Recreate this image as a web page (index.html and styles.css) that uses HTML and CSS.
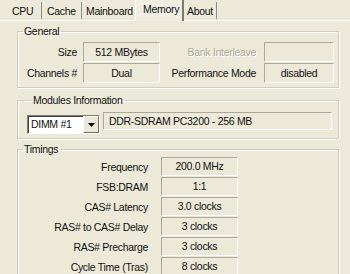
FILE: index.html
```html
<!DOCTYPE html>
<html>
<head>
<meta charset="utf-8">
<link rel="stylesheet" href="styles.css">
</head>
<body>
<div class="window">
  <div class="tabs">
    <div class="tab t-cpu">CPU</div>
    <div class="tab t-cache">Cache</div>
    <div class="tab t-main">Mainboard</div>
    <div class="tab t-mem active">Memory</div>
    <div class="tab t-about">About</div>
  </div>
  <div class="panel">
    <fieldset class="group g-general">
      <legend>General</legend>
      <div class="grid2">
        <div class="lbl l1">Size</div>
        <div class="box b1">512 MBytes</div>
        <div class="lbl l2 disabled">Bank Interleave</div>
        <div class="box b2"></div>
        <div class="lbl l1">Channels #</div>
        <div class="box b1">Dual</div>
        <div class="lbl l2">Performance Mode</div>
        <div class="box b2">disabled</div>
      </div>
    </fieldset>
    <fieldset class="group g-modules">
      <legend>Modules Information</legend>
      <div class="modrow">
        <div class="select">
          <span class="sel-text">DIMM #1</span>
          <span class="sel-btn"><svg width="7" height="4" viewBox="0 0 7 4"><path d="M0 0h7L3.5 4z" fill="#000"/></svg></span>
        </div>
        <div class="box desc">DDR-SDRAM PC3200 - 256 MB</div>
      </div>
    </fieldset>
    <fieldset class="group g-timings">
      <legend>Timings</legend>
      <div class="tgrid">
        <div class="lbl">Frequency</div><div class="box tb">200.0 MHz</div>
        <div class="lbl">FSB:DRAM</div><div class="box tb">1:1</div>
        <div class="lbl">CAS# Latency</div><div class="box tb">3.0 clocks</div>
        <div class="lbl">RAS# to CAS# Delay</div><div class="box tb">3 clocks</div>
        <div class="lbl">RAS# Precharge</div><div class="box tb">3 clocks</div>
        <div class="lbl">Cycle Time (Tras)</div><div class="box tb">8 clocks</div>
      </div>
    </fieldset>
  </div>
</div>
</body>
</html>
```

FILE: styles.css
```css
* { box-sizing: border-box; }
html, body {
  margin: 0;
  padding: 0;
  background: #ECE9D8;
}
body {
  font-family: "Liberation Sans", Arial, sans-serif;
  font-size: 10.5px;
  letter-spacing: -0.3px;
  color: #111;
  width: 350px;
  height: 274px;
  overflow: hidden;
}
.window {
  width: 350px;
}
.tabs {
  display: flex;
  height: 21px;
  align-items: flex-end;
  border-bottom: 1px solid #fff;
}
.tab {
  height: 17px;
  line-height: 18px;
  padding: 0;
  border-right: 1px solid #8f8d80;
  margin-bottom: 1px;
  white-space: nowrap;
}
.t-cpu { width: 42px; padding-left: 12px; }
.t-cache { width: 40px; padding-left: 5px; }
.t-main { width: 53px; padding-left: 4px; border-right: none; }
.t-mem {
  width: 49px;
  padding-left: 7px;
  height: 21px;
  line-height: 18px;
  margin-bottom: -1px;
  background: #F0EEE3;
  border-left: 1px solid #fff;
  border-right: 2px solid #7d7b6f;
}
.t-about { width: 33px; padding-left: 3px; }

.panel {
  padding: 4px 11px 0 17px;
  display: flex;
  flex-direction: column;
}
.group {
  margin: 0;
  border: 1px solid #D0CDBE;
  box-shadow: 1px 1px 0 #fff, inset 1px 1px 0 #fff;
  padding: 0;
  min-width: 0;
}
.group legend {
  margin-left: 5px;
  padding: 0 2px 0 1px;
  line-height: 13px;
}
.g-general {
  height: 63px;
  padding: 4px 8px 0 0;
}
.grid2 {
  display: grid;
  grid-template-columns: 59px 77px 92px 70px;
  grid-auto-rows: 20px;
  column-gap: 6px;
  row-gap: 1px;
}
.lbl {
  text-align: right;
  line-height: 20px;
  white-space: nowrap;
}
.lbl.l2 { padding-right: 2px; }
.disabled {
  color: #ACA899;
  text-shadow: 1px 1px 0 #fff;
}
.box {
  border: 1px solid;
  border-color: #ACA899 #fff #fff #ACA899;
  text-align: center;
  line-height: 18px;
  height: 20px;
  white-space: nowrap;
}
.g-modules {
  margin-top: 6px;
  height: 45px;
  padding: 8px 0 0 9px;
}
.modrow {
  display: flex;
  align-items: flex-start;
  gap: 3px;
}
.select {
  width: 73px;
  height: 19px;
  display: flex;
  background: #fff;
  border: 1px solid;
  border-color: #7f7d72 #fff #fff #7f7d72;
  box-shadow: inset 1px 1px 0 #404040;
}
.sel-text {
  flex: 1;
  padding-left: 3px;
  line-height: 17px;
}
.sel-btn {
  width: 16px;
  height: 17px;
  background: #ECE9D8;
  border: 1px solid;
  border-color: #fff #716f64 #716f64 #fff;
  display: flex;
  align-items: center;
  justify-content: center;
}
.desc {
  width: 229px;
  text-align: left;
  padding-left: 5px;
  height: 18px;
  line-height: 16px;
  margin-top: -3px;
}
.g-timings {
  margin-top: 4px;
  height: 140px;
  padding: 1px 0 0 0;
}
.tgrid {
  display: grid;
  grid-template-columns: 130px 77px;
  grid-auto-rows: 19px;
  row-gap: 1px;
  column-gap: 13px;
}
.tb {
  height: 19px;
  line-height: 17px;
}
```
